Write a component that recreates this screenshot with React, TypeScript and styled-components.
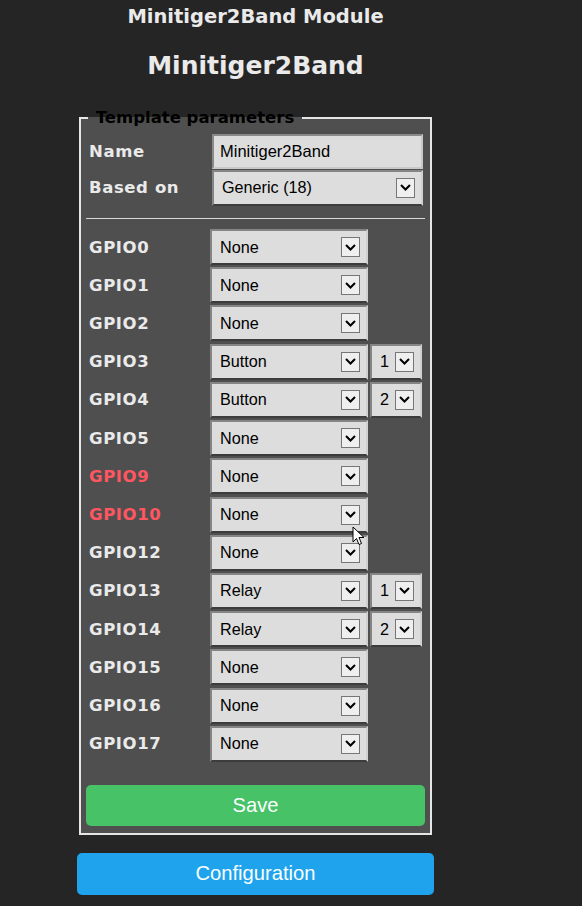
import * as React from 'react';
import styled, { createGlobalStyle } from 'styled-components';

interface Pin {
  name: string;
  value: string;
  index?: number;
  flash?: boolean;
}

const pins: Pin[] = [
  { name: 'GPIO0', value: 'None' },
  { name: 'GPIO1', value: 'None' },
  { name: 'GPIO2', value: 'None' },
  { name: 'GPIO3', value: 'Button', index: 1 },
  { name: 'GPIO4', value: 'Button', index: 2 },
  { name: 'GPIO5', value: 'None' },
  { name: 'GPIO9', value: 'None', flash: true },
  { name: 'GPIO10', value: 'None', flash: true },
  { name: 'GPIO12', value: 'None' },
  { name: 'GPIO13', value: 'Relay', index: 1 },
  { name: 'GPIO14', value: 'Relay', index: 2 },
  { name: 'GPIO15', value: 'None' },
  { name: 'GPIO16', value: 'None' },
  { name: 'GPIO17', value: 'None' },
];

const Chevron = () => (
  <svg width="11" height="7" viewBox="0 0 11 7">
    <path d="M1 1 L5.5 5.5 L10 1" fill="none" stroke="#000" strokeWidth="2" />
  </svg>
);

const Dropdown = ({ value }: { value: string }) => (
  <Select>
    <span>{value}</span>
    <ArrowBox>
      <Chevron />
    </ArrowBox>
  </Select>
);

export default function App() {
  return (
    <>
      <GlobalStyle />
      <Page>
        <Module>Minitiger2Band Module</Module>
        <DeviceName>Minitiger2Band</DeviceName>
        <Fieldset>
          <Legend>&nbsp;Template parameters&nbsp;</Legend>
          <TopTable>
            <Label>Name</Label>
            <TextInput>Minitiger2Band</TextInput>
            <Label>Based on</Label>
            <Dropdown value="Generic (18)" />
          </TopTable>
          <Rule />
          <GpioTable>
            {pins.map(pin => (
              <React.Fragment key={pin.name}>
                <Label flash={pin.flash}>{pin.name}</Label>
                <Dropdown value={pin.value} />
                {pin.index ? <Dropdown value={String(pin.index)} /> : <span />}
              </React.Fragment>
            ))}
          </GpioTable>
          <SaveButton>Save</SaveButton>
        </Fieldset>
        <ConfigButton>Configuration</ConfigButton>
      </Page>
      <Cursor width="13" height="20" viewBox="0 0 13 20">
        <path
          d="M1 1 L1 16 L4.5 12.5 L7 18.5 L9.5 17.5 L7 11.5 L12 11.5 Z"
          fill="#fff"
          stroke="#000"
          strokeWidth="1"
        />
      </Cursor>
    </>
  );
}

const GlobalStyle = createGlobalStyle`
  body {
    margin: 0;
    background: #252525;
    font-family: 'DejaVu Sans', Verdana, sans-serif;
  }
`;

const Page = styled.div`
  width: 357px;
  margin-left: 77px;
  padding-top: 5px;
  padding-bottom: 11px;
  color: #eaeaea;
`;

const Module = styled.h3`
  margin: 0;
  font-size: 19.5px;
  line-height: 24px;
  text-align: center;
`;

const DeviceName = styled.h2`
  margin: 22px 0 0;
  font-size: 25px;
  line-height: 30px;
  text-align: center;
`;

const Fieldset = styled.fieldset`
  margin: 27px 2px 0;
  padding: 5px;
  border: 2px solid #e6e6e6;
  background: #4f4f4f;
`;

const Legend = styled.legend`
  margin-left: 2px;
  padding: 0 2px;
  color: #000;
  font-size: 16.5px;
  font-weight: bold;
  line-height: 19px;
`;

const TopTable = styled.div`
  display: grid;
  grid-template-columns: 1fr 211px;
  grid-auto-rows: 35px;
  row-gap: 1px;
  align-items: center;
  margin: 2px 2px 0 0;
`;

const Label = styled.div<{ flash?: boolean }>`
  padding-left: 3px;
  color: ${p => (p.flash ? '#ff5661' : '#eaeaea')};
  font-size: 16.5px;
  font-weight: bold;
  letter-spacing: 0.6px;
`;

const TextInput = styled.div`
  box-sizing: border-box;
  height: 35px;
  display: flex;
  align-items: center;
  padding-left: 6px;
  background: #dddddd;
  border: 2px solid;
  border-color: #8a8a8a #c8c8c8 #c8c8c8 #8a8a8a;
  color: #000;
  font-family: 'Liberation Sans', Arial, sans-serif;
  font-size: 16.5px;
`;

const Select = styled.div`
  box-sizing: border-box;
  height: 36px;
  display: flex;
  align-items: center;
  justify-content: space-between;
  padding: 0 6px 0 8px;
  background: #dddddd;
  border: 2px solid;
  border-color: #858585 #d0d0d0 #3c3c3c #858585;
  color: #000;
  font-family: 'Liberation Sans', Arial, sans-serif;
  font-size: 16.2px;
`;

const ArrowBox = styled.span`
  box-sizing: border-box;
  width: 19px;
  height: 20px;
  display: flex;
  align-items: center;
  justify-content: center;
  background: #efefef;
  border: 1px solid #767676;
`;

const Rule = styled.hr`
  margin: 13px 0 10px;
  border: 0;
  border-top: 1px solid #d8d8d8;
`;

const GpioTable = styled.div`
  display: grid;
  grid-template-columns: 122px 158px 52px;
  grid-auto-rows: 36px;
  row-gap: 2.23px;
  column-gap: 2px;
  align-items: center;
`;

const Button = styled.button`
  display: block;
  width: 100%;
  border: 0;
  border-radius: 5px;
  color: #faffff;
  font-family: 'Liberation Sans', Arial, sans-serif;
  font-size: 20.2px;
`;

const SaveButton = styled(Button)`
  height: 41px;
  margin-top: 23px;
  margin-bottom: 2px;
  background: #47c266;
`;

const ConfigButton = styled(Button)`
  height: 42px;
  margin-top: 18px;
  background: #1fa3ec;
`;

const Cursor = styled.svg`
  position: absolute;
  left: 352px;
  top: 526px;
`;
